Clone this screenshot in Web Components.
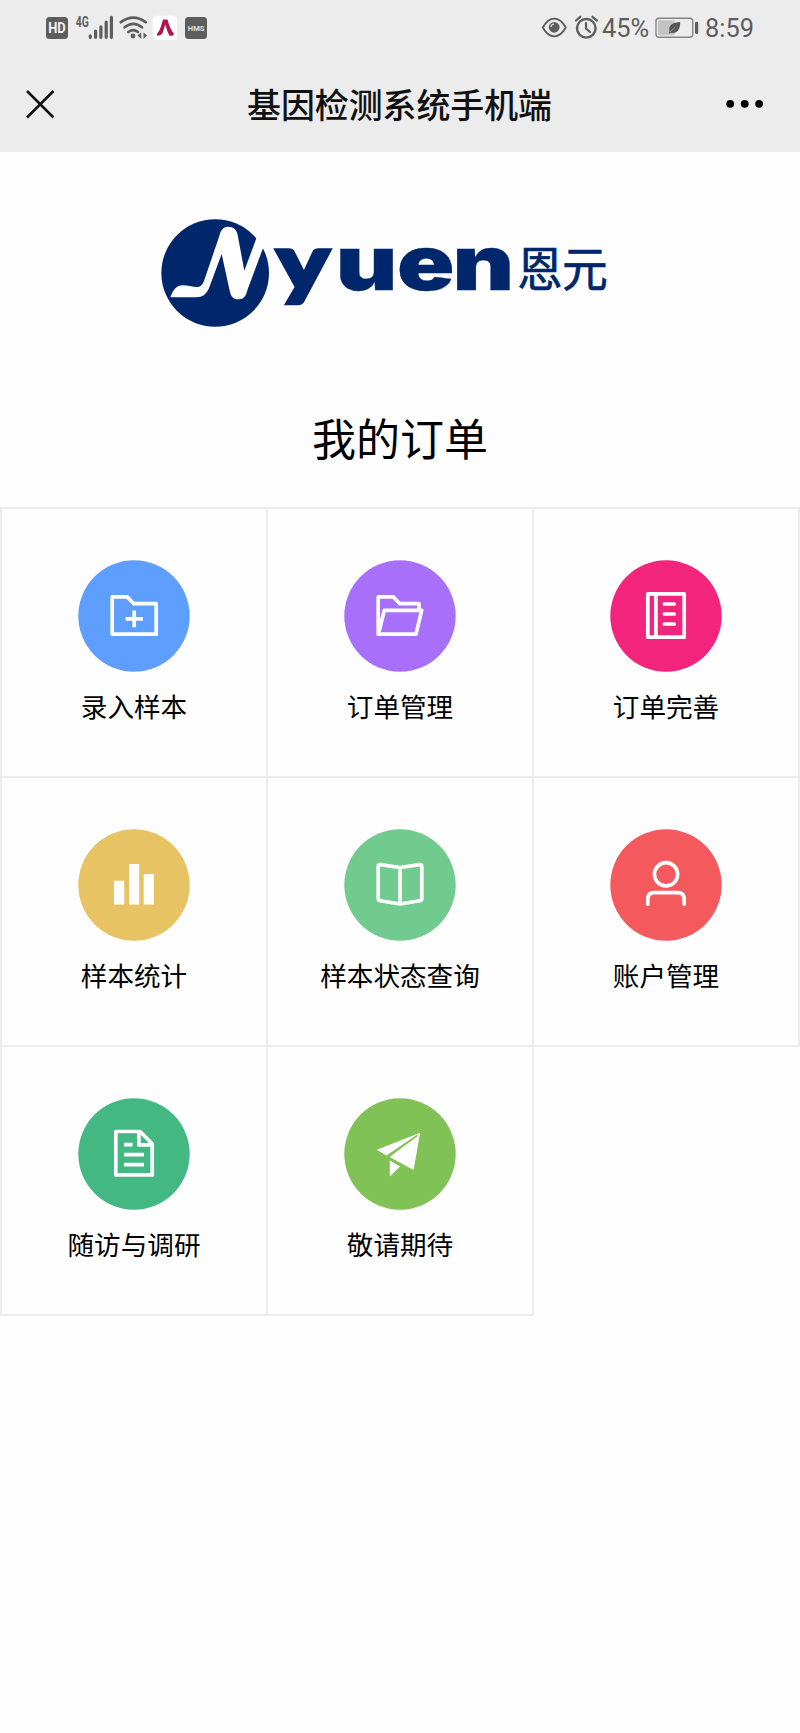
<!DOCTYPE html>
<html lang="zh-CN">
<head>
<meta charset="utf-8">
<title>基因检测系统手机端</title>
<style>
html,body{margin:0;padding:0;background:#fefefe}
body{font-family:"Noto Sans CJK SC","Noto Sans",sans-serif;color:#000}
</style>
</head>
<body>
<gene-app></gene-app>
<script>
const define = (name, html) => {
  const t = document.createElement('template');
  t.innerHTML = html;
  customElements.define(name, class extends HTMLElement {
    constructor() {
      super();
      this.attachShadow({mode: 'open'}).append(t.content.cloneNode(true));
    }
  });
};

define('status-bar', `
<style>
:host{display:flex;justify-content:space-between;align-items:flex-start;height:56px;padding:0 46px;box-sizing:border-box;background:#ececec;color:#5d5d5d}
.g{display:flex;height:56px;align-items:center}
svg{display:block;flex:none}
.t{font:25.4px/57px Roboto,sans-serif;white-space:nowrap}
</style>
<div class="g">
<svg width="164" height="56" viewBox="46 0 164 56">
  <rect x="46" y="17" width="22" height="22" rx="3.5" fill="#5d5d5d"/>
  <text x="57" y="33.3" text-anchor="middle" textLength="17.5" lengthAdjust="spacingAndGlyphs" font-family="Roboto,sans-serif" font-weight="700" font-size="14.5" fill="#f2f2f2">HD</text>
  <text x="75.8" y="26.5" textLength="13" lengthAdjust="spacingAndGlyphs" font-family="Roboto,sans-serif" font-weight="700" font-size="14" fill="#5d5d5d">4G</text>
  <g stroke="#5d5d5d" stroke-width="3.2" stroke-linecap="round"><path d="M90.3 35.8V37.3M95.6 31.2V37.3M100.9 26.8V37.3M106.2 22V37.3M111.4 17.3V37.3"/></g>
  <g fill="none" stroke="#5d5d5d" stroke-width="2.7" stroke-linecap="round"><path d="M120.8 22.2Q133.3 13 145.7 22.2M124.6 27.3Q133.3 20.4 142 27.3M128.3 32Q133.3 28.3 138 32"/></g>
  <circle cx="133" cy="36" r="2.4" fill="#5d5d5d"/>
  <path d="M141.3 32.500V39L137.500 35.500ZM143.500 32.500V39L147 35.500Z" fill="#5d5d5d"/>
  <rect x="152.7" y="15.7" width="24.6" height="24.4" rx="5" fill="#fff"/>
  <path d="M157 35.800Q156.500 34 158 32.500Q160 30.500 163 19.500H167.500Q170 29 173.500 33Q174.500 35.800 172 35.800H169.500Q167 31 165.200 24.500L163 32Q162 35.800 157 35.800Z" fill="#ad164e"/>
  <rect x="185" y="17" width="22" height="22" rx="3.5" fill="#5d5d5d"/>
  <text x="196.1" y="31" text-anchor="middle" textLength="16.5" lengthAdjust="spacingAndGlyphs" font-family="Roboto,sans-serif" font-weight="700" font-size="7.4" fill="#e4e4e4">HMS</text>
</svg>
</div>
<div class="g">
<svg width="61" height="56" viewBox="542 0 61 56" fill="none" stroke="#5d5d5d">
  <path d="M543.8 27.5C550.5 15.7 560 15.7 566.8 27.5C560 39.3 550.5 39.3 543.8 27.5Z" stroke-width="1.9" stroke-linejoin="round"/>
  <circle cx="555.2" cy="27.3" r="5.4" fill="#5d5d5d" stroke="none"/>
  <path d="M552 27A3.3 3.3 0 0 1 555 24" stroke="#ececec" stroke-width="1.1"/>
  <circle cx="587.3" cy="28.3" r="9.3" stroke-width="2.4"/>
  <path d="M577 20.5L581.3 16.8M597.8 20.5L593.4 16.8" stroke-width="2.3" stroke-linecap="round"/>
  <path d="M587 23V28.5L591 32" stroke-width="2.2" stroke-linecap="round"/>
</svg>
<span class="t" style="width:53px">45%</span>
<svg width="50" height="56" viewBox="656 0 50 56">
  <rect x="657" y="18.2" width="36.8" height="19" rx="3" fill="none" stroke="#858585" stroke-width="1.4"/>
  <rect x="659" y="20.2" width="16.5" height="15" rx="1" fill="#c3c3c3"/>
  <rect x="696" y="21.7" width="3.2" height="12.2" rx="1.4" fill="#5d5d5d"/>
  <path d="M681.2 22C674 22.3 669 25.5 670.6 31.2L669.6 33.5L671.5 32.8C678 34.3 681.5 29 681.2 22Z" fill="#555"/>
  <path d="M671 32L676.5 27" stroke="#bbb" stroke-width=".7"/>
</svg>
<span class="t">8:59</span>
</div>`);

define('nav-bar', `
<style>
:host{display:flex;justify-content:space-between;align-items:center;height:96px;box-sizing:border-box;padding:0 36px 0 25px;background:#ececec;color:#111}
svg{display:block}
h1{margin:0;font-size:33.9px;line-height:96px;font-weight:500;white-space:nowrap;padding-left:17px}
</style>
<svg width="31" height="31" viewBox="0 0 31 31"><path d="M2 2L28.5 28.5M28.5 2L2 28.5" stroke="#111" stroke-width="2.5"/></svg>
<h1><slot></slot></h1>
<svg width="38" height="10" viewBox="0 0 38 10"><circle cx="4.2" cy="4.8" r="3.9"/><circle cx="18.7" cy="4.8" r="3.9"/><circle cx="33.1" cy="4.8" r="3.9"/></svg>`);

define('brand-logo', `
<style>:host{display:block;padding:48px 0 0 150px;height:140px}svg{display:block}</style>
<svg width="470" height="140" viewBox="0 0 1410 420">
  <circle cx="195.500" cy="219" r="161.500" fill="#00276c"/>
  <path d="M61 292C70 268 80 256 98 256C115 256 130 262 143 261C155 259 158 252 162 243L208 108C212 88 222 80 234 80C250 80 260 88 263 105L283 212L318 118L330 95L365 120L338 147L293 268C288 290 280 298 267 298C250 298 243 290 239 272L215 162L178 262C170 283 157 292 138 292Z" fill="#fff"/>
  <text transform="translate(0 271) scale(1.26 1)" x="302 442 588 720" y="0" font-family="Inter,sans-serif" font-weight="900" font-size="226" fill="#00276c" stroke="#00276c" stroke-width="1"><tspan font-family="Lato,sans-serif" font-size="234" stroke-width="11">y</tspan>uen</text>
  <text transform="translate(1101 259) scale(.98 1)" x="0 138" y="0" font-family="Noto Sans CJK SC,sans-serif" font-weight="400" font-size="140" fill="#00276c" stroke="#00276c" stroke-width="2">恩元</text>
</svg>`);

const icons = {
  add: '<path d="M34.2 36.900H49.200L55.800 43.700H78.200V74.200H34.200ZM56.200 50.400V67.200M47.700 58.900H64.900"/>',
  folder: '<path d="M75 50V43.700H55.800L49.200 36.900H34.200V74.200H72L77.700 50.300H40.300L34.400 74.200"/>',
  book: '<path d="M37.800 33.800H74.200V77.200H37.800ZM45.900 34V77"/><path stroke-linecap="round" d="M54.400 44H64.200M54.400 54H64.200M54.400 64H64.200"/>',
  bars: '<path stroke="none" fill="#fff" d="M36 51.700H46.200V75.400H36ZM51.100 35H61.200V75.400H51.100ZM65.700 45H76V75.400H65.700Z"/>',
  open: '<path d="M56 38.500L36.500 35.600Q34.200 35.300 34.200 37.600V69.400Q34.200 71.300 36.200 71.700L56 75L75.800 71.700Q77.800 71.300 77.800 69.400V37.600Q77.800 35.300 75.500 35.600ZM56 38.500V75"/>',
  user: '<circle cx="56" cy="45.300" r="11.600"/><path stroke-linecap="round" d="M37.800 75.200V70.300Q37.800 63.700 44.400 63.700H67.600Q74.200 63.700 74.200 70.300V75.200"/>',
  doc: '<path d="M62 33.500H37.800V76.900H74.200V45.800ZM60.900 33.500V46.900H74.200M46 46.700H54.600M46 56.700H66M46 66.700H66"/>',
  plane: '<path stroke="none" fill="#fff" d="M32.700 51.700L76.100 34.700L42.400 57.600ZM76.100 34.700L45.600 59L69.600 72ZM45.800 62.500L56.100 68.400L45.800 78.400Z"/><path d="M73.500 37.300L44.800 58.500" stroke="#80c255" stroke-width="1.500"/>'
};

customElements.define('menu-tile', class extends HTMLElement {
  constructor() {
    super();
    this.attachShadow({mode: 'open'}).innerHTML = `
<style>
:host{display:flex;flex-direction:column;align-items:center;height:269px;width:266px;box-sizing:border-box;padding-top:51px;border-right:2px solid #ededed;border-bottom:2px solid #ededed;font-size:26.6px;line-height:40px}
svg{display:block;margin-bottom:14px}
</style>
<svg width="112" height="112" viewBox="0 0 112 112" fill="none" stroke="#fff" stroke-width="3.7" stroke-linejoin="round"><circle cx="56" cy="56" r="55.700" stroke="none" fill="${this.getAttribute('color')}"/>${icons[this.getAttribute('icon')]}</svg>
<slot></slot>`;
  }
});

define('menu-grid', `
<style>
:host{display:block}
.top{height:2px;background:#ededed}
.edge{display:grid;grid-template-columns:2px 798px}
.edge i{background:#ededed}
.grid{display:grid;grid-template-columns:repeat(3,266px)}
</style>
<div class="top"></div>
<div class="edge"><i></i><div class="grid"><slot></slot></div></div>`);

define('gene-app', `
<style>
:host{display:block;width:800px;height:1733px;overflow:hidden;background:#fefefe}
h2{margin:0;height:167px;padding-top:65px;box-sizing:border-box;text-align:center;font-size:44px;font-weight:400;line-height:64px}
</style>
<status-bar></status-bar>
<nav-bar>基因检测系统手机端</nav-bar>
<brand-logo></brand-logo>
<h2>我的订单</h2>
<menu-grid>
  <menu-tile icon="add" color="#5e9eff">录入样本</menu-tile>
  <menu-tile icon="folder" color="#a76ffa">订单管理</menu-tile>
  <menu-tile icon="book" color="#f3247b">订单完善</menu-tile>
  <menu-tile icon="bars" color="#e8c363">样本统计</menu-tile>
  <menu-tile icon="open" color="#71cb8f">样本状态查询</menu-tile>
  <menu-tile icon="user" color="#f3595d">账户管理</menu-tile>
  <menu-tile icon="doc" color="#44b883">随访与调研</menu-tile>
  <menu-tile icon="plane" color="#80c255">敬请期待</menu-tile>
</menu-grid>`);
</script>
</body>
</html>
